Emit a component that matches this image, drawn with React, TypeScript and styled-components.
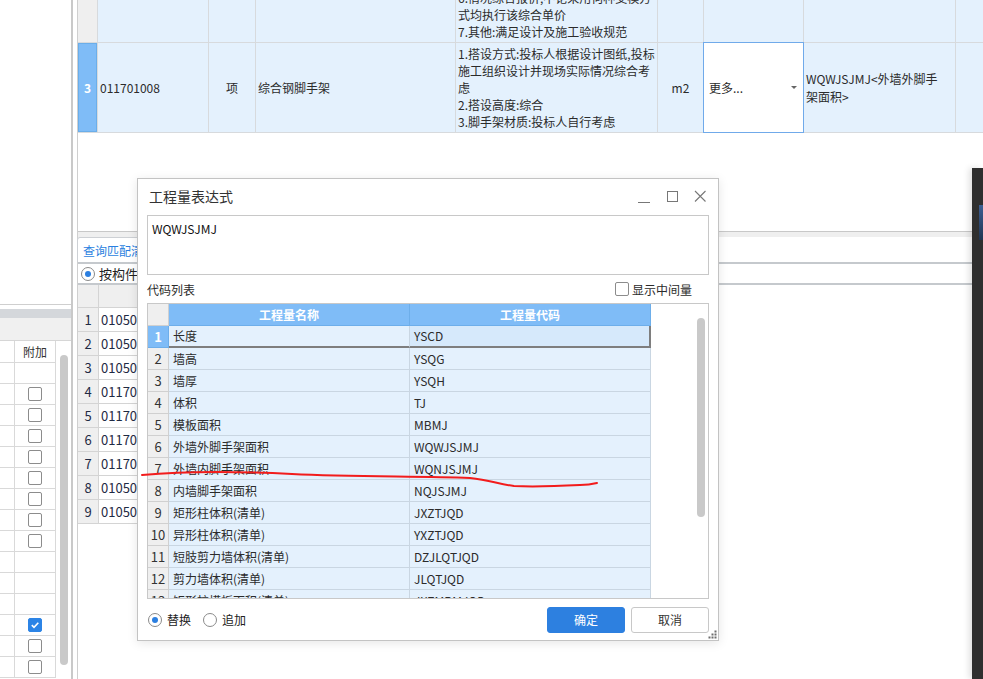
import React from "react";
import styled, { createGlobalStyle, css } from "styled-components";

const GlobalStyle = createGlobalStyle`
  html, body { margin: 0; padding: 0; background: #fff; }
  body {
    font-family: "Noto Sans CJK SC", "Microsoft YaHei", sans-serif;
    font-size: 12px;
    color: #2b2b2b;
    overflow: hidden;
  }
  * { box-sizing: border-box; }
`;

const Page = styled.div`
  position: relative;
  width: 983px;
  height: 679px;
  overflow: hidden;
  display: flex;
  background: #fff;
`;

/* ---------- left panel ---------- */
const LeftPanel = styled.div`
  width: 73px;
  flex: none;
  display: flex;
  flex-direction: column;
  border-right: 2px solid #c9c9c9;
`;
const LeftTopBox = styled.div`
  height: 305px;
  flex: none;
  border-bottom: 1px solid #cfcfcf;
`;
const LeftSpacer = styled.div`
  height: 4px;
  flex: none;
`;
const LeftBar = styled.div`
  height: 9px;
  flex: none;
  background: #d4d7db;
`;
const LeftStrip = styled.div`
  height: 23px;
  flex: none;
  background: #f0f0f0;
  border-bottom: 1px solid #d6d6d6;
`;
const LeftBody = styled.div`
  flex: 1;
  display: flex;
  min-height: 0;
`;
const LeftGrid = styled.div`
  width: 56px;
  flex: none;
  display: flex;
  flex-direction: column;
`;
const LeftRow = styled.div<{ $head?: boolean }>`
  display: grid;
  grid-template-columns: 15px 41px;
  height: ${(p) => (p.$head ? 22 : 21)}px;
  flex: none;
`;
const LeftCell = styled.div`
  border-right: 1px solid #d9d9d9;
  border-bottom: 1px solid #d9d9d9;
  display: flex;
  align-items: center;
  justify-content: center;
  color: #333;
`;
const ScrollTrack = styled.div`
  flex: 1;
  display: flex;
  justify-content: center;
  padding: 14px 0 0 0;
`;
const ScrollThumb = styled.div<{ $h: number }>`
  width: 8px;
  height: ${(p) => p.$h}px;
  border-radius: 4px;
  background: #c9c9c9;
`;

const Checkbox = styled.span<{ $checked?: boolean }>`
  width: 14px;
  height: 14px;
  border-radius: 2px;
  display: inline-flex;
  align-items: center;
  justify-content: center;
  flex: none;
  border: 1px solid ${(p) => (p.$checked ? "#2c84e6" : "#8c8c8c")};
  background: ${(p) => (p.$checked ? "#2c84e6" : "#fff")};
`;

/* ---------- main area ---------- */
const Main = styled.div`
  flex: 1;
  padding-left: 4px;
  display: flex;
  min-width: 0;
`;
const MainInner = styled.div`
  flex: 1;
  border-left: 1px solid #cfcfcf;
  display: flex;
  flex-direction: column;
  min-width: 0;
`;
const UpperPanel = styled.div`
  height: 232px;
  flex: none;
  border-bottom: 1px solid #c8c8c8;
`;
const UpperGrid = styled.div`
  display: grid;
  grid-template-columns: 19px 110px 46px 199px 201px 45px 99px 151px 1fr;
  grid-template-rows: 42px 89px;
  gap: 1px;
  padding-bottom: 1px;
  background: #d7dadd;
`;
const UCell = styled.div<{ $center?: boolean }>`
  background: #e4f1fd;
  display: flex;
  align-items: center;
  justify-content: ${(p) => (p.$center ? "center" : "flex-start")};
  padding: 0 2px;
  overflow: hidden;
  white-space: nowrap;
`;
const URowHead = styled.div<{ $active?: boolean }>`
  display: flex;
  align-items: center;
  justify-content: center;
  font-weight: bold;
  color: #fff;
  background: ${(p) => (p.$active ? "#7fbcf7" : "#efefef")};
  ${(p) =>
    p.$active &&
    css`
      box-shadow: inset 0 0 0 1px #6aaeea;
    `}
`;
const DescCell = styled.div<{ $bottom?: boolean }>`
  background: #e4f1fd;
  display: flex;
  flex-direction: column;
  justify-content: ${(p) => (p.$bottom ? "flex-end" : "center")};
  padding: 0 2px ${(p) => (p.$bottom ? 2 : 0)}px 2px;
  overflow: hidden;
  white-space: nowrap;
  line-height: 17px;
`;
const ExprCell = styled(DescCell)`
  line-height: 18px;
`;
const DropCell = styled.div`
  margin: -1px;
  position: relative;
  z-index: 1;
  background: #fff;
  border: 1px solid #70aaea;
  display: flex;
  align-items: center;
  justify-content: space-between;
  padding: 0 6px 0 5px;
`;
const Caret = styled.span`
  width: 0;
  height: 0;
  border-left: 3px solid transparent;
  border-right: 3px solid transparent;
  border-top: 3px solid #666;
`;
const GrayStrip = styled.div`
  height: 5px;
  flex: none;
  background: #efefef;
`;
const TabBar = styled.div`
  height: 27px;
  flex: none;
  display: flex;
  align-items: flex-end;
  border-bottom: 2px solid #c5c9cd;
`;
const Tab = styled.div`
  height: 25px;
  padding: 0 5px;
  display: flex;
  align-items: center;
  color: #2b7fe0;
  background: #fff;
  border: 1px solid #cdd0d4;
  border-bottom: none;
  border-radius: 3px 3px 0 0;
  margin-left: -1px;
  white-space: nowrap;
`;
const RadioRow = styled.div`
  height: 21px;
  flex: none;
  display: flex;
  align-items: center;
  gap: 4px;
  padding-left: 3px;
  border-bottom: 2px solid #c5c9cd;
  color: #222;
  font-size: 13px;
`;
const Radio = styled.span<{ $checked?: boolean }>`
  width: 14px;
  height: 14px;
  border-radius: 50%;
  border: 1px solid #8a8a8a;
  background: #fff;
  display: inline-flex;
  align-items: center;
  justify-content: center;
  flex: none;
  &::after {
    content: "";
    width: 6px;
    height: 6px;
    border-radius: 50%;
    background: ${(p) => (p.$checked ? "#2b7fe0" : "transparent")};
  }
`;
const LowerTable = styled.div`
  width: 61px;
  display: flex;
  flex-direction: column;
`;
const LRow = styled.div<{ $head?: boolean }>`
  display: grid;
  grid-template-columns: 21px 40px;
  height: ${(p) => (p.$head ? 23 : 24)}px;
  background: ${(p) => (p.$head ? "#efefef" : "#fff")};
`;
const LCell = styled.div<{ $num?: boolean }>`
  border-right: 1px solid #d4d4d4;
  border-bottom: 1px solid #d4d4d4;
  display: flex;
  align-items: center;
  justify-content: ${(p) => (p.$num ? "center" : "flex-start")};
  padding-left: ${(p) => (p.$num ? 0 : 2)}px;
  background: ${(p) => (p.$num ? "#efefef" : "transparent")};
  font-size: 13px;
  color: #1f2a44;
  white-space: nowrap;
`;

/* ---------- dialog ---------- */
const Dialog = styled.div`
  position: absolute;
  left: 137px;
  top: 178px;
  width: 582px;
  height: 463px;
  background: #fff;
  border: 1px solid #c3c3c3;
  box-shadow: 0 2px 10px rgba(0, 0, 0, 0.1);
  display: flex;
  flex-direction: column;
  padding: 0 9px;
  z-index: 5;
`;
const TitleBar = styled.div`
  height: 36px;
  flex: none;
  display: flex;
  align-items: center;
  padding: 0 0 3px 2px;
  font-size: 14px;
  color: #333;
`;
const WinButtons = styled.div`
  margin-left: auto;
  margin-right: -5px;
  display: flex;
  align-items: center;
`;
const WinButton = styled.span`
  width: 28px;
  height: 24px;
  display: flex;
  align-items: center;
  justify-content: center;
`;
const ExprBox = styled.div`
  height: 60px;
  flex: none;
  border: 1px solid #c8c8c8;
  padding: 4px 4px;
  line-height: 18px;
  color: #111;
`;
const ListHeader = styled.div`
  height: 28px;
  flex: none;
  display: flex;
  align-items: center;
  justify-content: space-between;
  padding-right: 17px;
`;
const CheckLabel = styled.label`
  display: flex;
  align-items: center;
  gap: 3px;
  font-size: 12px;
`;
const TableBox = styled.div`
  height: 296px;
  flex: none;
  border: 1px solid #c8c8c8;
  display: flex;
  overflow: hidden;
`;
const CodeGrid = styled.div`
  width: 503px;
  flex: none;
  display: flex;
  flex-direction: column;
`;
const CodeRow = styled.div`
  display: grid;
  grid-template-columns: 21px 241px 241px;
  height: 22px;
  flex: none;
`;
const HeadCell = styled.div<{ $corner?: boolean }>`
  display: flex;
  align-items: center;
  justify-content: center;
  font-weight: bold;
  color: #fff;
  background: ${(p) => (p.$corner ? "#efefef" : "#7fbcf7")};
  border-right: 1px solid ${(p) => (p.$corner ? "#d0d0d0" : "#6daeea")};
  border-bottom: 1px solid ${(p) => (p.$corner ? "#d0d0d0" : "#6daeea")};
`;
const NumCell = styled.div<{ $active?: boolean }>`
  display: flex;
  align-items: center;
  justify-content: center;
  font-size: 13px;
  line-height: 16px;
  background: ${(p) => (p.$active ? "#7fbcf7" : "#efefef")};
  color: ${(p) => (p.$active ? "#fff" : "#333")};
  font-weight: ${(p) => (p.$active ? "bold" : "normal")};
  border-right: 1px solid ${(p) => (p.$active ? "#6daeea" : "#d0d0d0")};
  border-bottom: 1px solid ${(p) => (p.$active ? "#6daeea" : "#d0d0d0")};
`;
const DataCell = styled.div<{ $sel?: boolean; $last?: boolean; $hi?: boolean }>`
  display: flex;
  align-items: center;
  padding-left: 4px;
  white-space: nowrap;
  overflow: hidden;
  line-height: 16px;
  background: ${(p) => (p.$hi ? "#d6e9fb" : "#e4f1fd")};
  border-right: 1px solid #c9d6e2;
  border-bottom: 1px solid #c9d6e2;
  ${(p) =>
    p.$sel &&
    css`
      border-bottom: 2px solid #7e7e7e;
    `}
  ${(p) =>
    p.$sel &&
    p.$last &&
    css`
      border-right: 2px solid #7e7e7e;
    `}
`;
const GridScroll = styled.div`
  flex: 1;
  display: flex;
  justify-content: flex-end;
  padding: 14px 3px 0 0;
`;
const Footer = styled.div`
  flex: 1;
  display: flex;
  align-items: center;
  justify-content: space-between;
`;
const RadioGroup = styled.div`
  display: flex;
  align-items: center;
  padding-left: 1px;
  font-size: 12px;
  color: #222;
`;
const RadioLabel = styled.label`
  display: flex;
  align-items: center;
  gap: 5px;
  margin-right: 12px;
`;
const ButtonRow = styled.div`
  display: flex;
  gap: 6px;
`;
const Button = styled.button<{ $primary?: boolean }>`
  width: 78px;
  height: 26px;
  border-radius: 3px;
  font-family: inherit;
  font-size: 12px;
  padding: 0;
  border: 1px solid ${(p) => (p.$primary ? "#2d80e0" : "#c8c8c8")};
  background: ${(p) => (p.$primary ? "#2d80e0" : "#fff")};
  color: ${(p) => (p.$primary ? "#fff" : "#333")};
`;
const Grip = styled.svg`
  position: absolute;
  right: 1px;
  bottom: 1px;
`;

/* ---------- overlays ---------- */
const SidePanel = styled.div`
  position: absolute;
  left: 972px;
  top: 168px;
  width: 11px;
  bottom: 0;
  background: #2f2f2f;
  box-shadow: -3px 0 6px rgba(0, 0, 0, 0.12);
  z-index: 6;
`;
const SideAccent = styled.div`
  margin: 37px 0 0 7px;
  width: 4px;
  height: 35px;
  background: linear-gradient(#3d5f93, #203552);
`;
const Annotation = styled.svg`
  position: absolute;
  left: 0;
  top: 0;
  pointer-events: none;
  z-index: 10;
`;

const checkMark = (
  <svg width="10" height="10" viewBox="0 0 10 10">
    <path d="M1.8 5.2 L4 7.3 L8.3 2.8" stroke="#fff" strokeWidth="1.6" fill="none" />
  </svg>
);

const leftRows: ("" | "cb" | "on")[] = [
  "",
  "cb",
  "cb",
  "cb",
  "cb",
  "cb",
  "cb",
  "cb",
  "cb",
  "",
  "",
  "",
  "on",
  "cb",
  "cb",
];

/* only the part of each code that shows beside the dialog */
const lowerRows = ["01050", "01050", "01050", "01170", "01170", "01170", "01170", "01050", "01050"];

const codeRows: [string, string][] = [
  ["长度", "YSCD"],
  ["墙高", "YSQG"],
  ["墙厚", "YSQH"],
  ["体积", "TJ"],
  ["模板面积", "MBMJ"],
  ["外墙外脚手架面积", "WQWJSJMJ"],
  ["外墙内脚手架面积", "WQNJSJMJ"],
  ["内墙脚手架面积", "NQJSJMJ"],
  ["矩形柱体积(清单)", "JXZTJQD"],
  ["异形柱体积(清单)", "YXZTJQD"],
  ["短肢剪力墙体积(清单)", "DZJLQTJQD"],
  ["剪力墙体积(清单)", "JLQTJQD"],
  ["矩形柱模板面积(清单)", "JXZMBMJQD"],
];

export default function App() {
  return (
    <>
      <GlobalStyle />
      <Page>
        <LeftPanel>
          <LeftTopBox />
          <LeftSpacer />
          <LeftBar />
          <LeftStrip />
          <LeftBody>
            <LeftGrid>
              <LeftRow $head>
                <LeftCell />
                <LeftCell>附加</LeftCell>
              </LeftRow>
              {leftRows.map((r, i) => (
                <LeftRow key={i}>
                  <LeftCell />
                  <LeftCell>
                    {r === "cb" && <Checkbox />}
                    {r === "on" && <Checkbox $checked>{checkMark}</Checkbox>}
                  </LeftCell>
                </LeftRow>
              ))}
            </LeftGrid>
            <ScrollTrack>
              <ScrollThumb $h={310} />
            </ScrollTrack>
          </LeftBody>
        </LeftPanel>

        <Main>
          <MainInner>
            <UpperPanel>
              <UpperGrid>
                <URowHead />
                <UCell />
                <UCell />
                <UCell />
                <DescCell $bottom>
                  <span>6.情况综合报价,不论采用何种支模方</span>
                  <span>式均执行该综合单价</span>
                  <span>7.其他:满足设计及施工验收规范</span>
                </DescCell>
                <UCell />
                <UCell />
                <UCell />
                <UCell />

                <URowHead $active>3</URowHead>
                <UCell>011701008</UCell>
                <UCell $center>项</UCell>
                <UCell>综合钢脚手架</UCell>
                <DescCell>
                  <span>1.搭设方式:投标人根据设计图纸,投标</span>
                  <span>施工组织设计并现场实际情况综合考</span>
                  <span>虑</span>
                  <span>2.搭设高度:综合</span>
                  <span>3.脚手架材质:投标人自行考虑</span>
                </DescCell>
                <UCell $center>m2</UCell>
                <DropCell>
                  <span>更多...</span>
                  <Caret />
                </DropCell>
                <ExprCell>
                  <span>WQWJSJMJ&lt;外墙外脚手</span>
                  <span>架面积&gt;</span>
                </ExprCell>
                <UCell />
              </UpperGrid>
            </UpperPanel>
            <GrayStrip />
            <TabBar>
              <Tab>查询匹配清单</Tab>
            </TabBar>
            <RadioRow>
              <Radio $checked />
              <span>按构件</span>
            </RadioRow>
            <LowerTable>
              <LRow $head>
                <LCell $num />
                <LCell />
              </LRow>
              {lowerRows.map((c, i) => (
                <LRow key={i}>
                  <LCell $num>{i + 1}</LCell>
                  <LCell>{c}</LCell>
                </LRow>
              ))}
            </LowerTable>
          </MainInner>
        </Main>

        <SidePanel>
          <SideAccent />
        </SidePanel>

        <Dialog>
          <TitleBar>
            <span>工程量表达式</span>
            <WinButtons>
              <WinButton>
                <svg width="14" height="14" viewBox="0 0 14 14">
                  <path d="M1 13.5 H13" stroke="#777" strokeWidth="1" />
                </svg>
              </WinButton>
              <WinButton>
                <svg width="12" height="12" viewBox="0 0 12 12">
                  <rect x="1.5" y="1.5" width="10" height="10" stroke="#777" fill="none" />
                </svg>
              </WinButton>
              <WinButton>
                <svg width="12" height="12" viewBox="0 0 12 12">
                  <path d="M1 1 L11.5 11.5 M11.5 1 L1 11.5" stroke="#777" strokeWidth="1.1" />
                </svg>
              </WinButton>
            </WinButtons>
          </TitleBar>
          <ExprBox>WQWJSJMJ</ExprBox>
          <ListHeader>
            <span>代码列表</span>
            <CheckLabel>
              <Checkbox />
              <span>显示中间量</span>
            </CheckLabel>
          </ListHeader>
          <TableBox>
            <CodeGrid>
              <CodeRow>
                <HeadCell $corner />
                <HeadCell>工程量名称</HeadCell>
                <HeadCell>工程量代码</HeadCell>
              </CodeRow>
              {codeRows.map(([name, code], i) => (
                <CodeRow key={code}>
                  <NumCell $active={i === 0}>{i + 1}</NumCell>
                  <DataCell $sel={i === 0}>{name}</DataCell>
                  <DataCell $sel={i === 0} $last $hi={i === 0}>
                    {code}
                  </DataCell>
                </CodeRow>
              ))}
            </CodeGrid>
            <GridScroll>
              <ScrollThumb $h={199} />
            </GridScroll>
          </TableBox>
          <Footer>
            <RadioGroup>
              <RadioLabel>
                <Radio $checked />
                <span>替换</span>
              </RadioLabel>
              <RadioLabel>
                <Radio />
                <span>追加</span>
              </RadioLabel>
            </RadioGroup>
            <ButtonRow>
              <Button $primary>确定</Button>
              <Button>取消</Button>
            </ButtonRow>
          </Footer>
          <Grip width="9" height="9" viewBox="0 0 9 9">
            <g fill="#6e6e6e">
              <rect x="6.5" y="0.5" width="2" height="2" />
              <rect x="3.5" y="3.5" width="2" height="2" />
              <rect x="6.5" y="3.5" width="2" height="2" />
              <rect x="0.5" y="6.5" width="2" height="2" />
              <rect x="3.5" y="6.5" width="2" height="2" />
              <rect x="6.5" y="6.5" width="2" height="2" />
            </g>
          </Grip>
        </Dialog>

        <Annotation width="983" height="679" viewBox="0 0 983 679">
          <path
            d="M142 475 C 175 472, 230 471, 292 474 S 420 476, 470 478 C 490 480, 498 484, 514 486 C 535 487, 560 486, 580 485 C 588 485, 593 484, 597 483"
            stroke="#f21c1c"
            strokeWidth="2"
            fill="none"
            strokeLinecap="round"
          />
        </Annotation>
      </Page>
    </>
  );
}
